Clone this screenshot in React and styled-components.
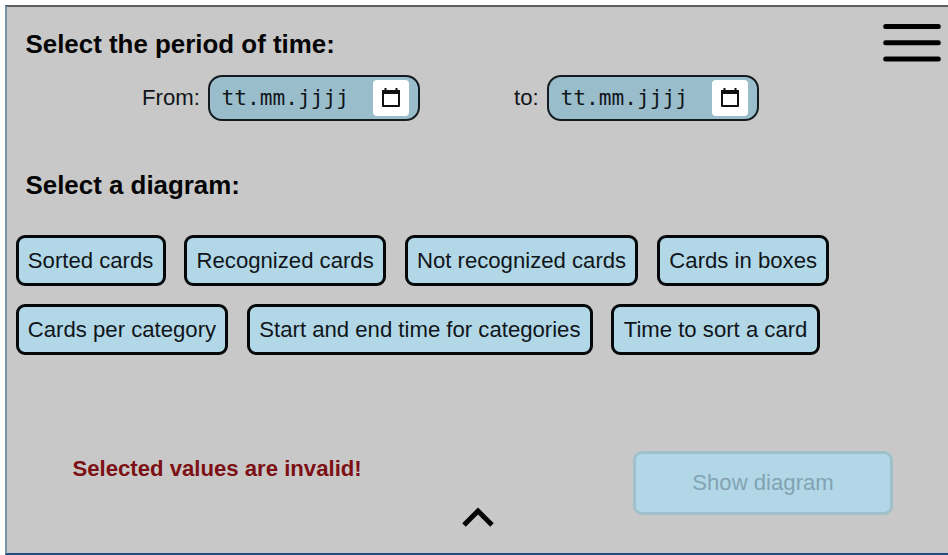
import React from "react";
import styled, { createGlobalStyle } from "styled-components";

const GlobalStyle = createGlobalStyle`
  * { box-sizing: border-box; }
  body {
    margin: 0;
    background: #fff;
    font-family: "Liberation Sans", Arial, sans-serif;
    font-size: 22.15px;
    line-height: 26px;
    color: #10151a;
  }
  button { font: inherit; color: inherit; }
`;

const Page = styled.div`
  height: 555px;
  padding: 5px 0 0 5px;
  overflow: hidden;
`;

const Panel = styled.main`
  display: flex;
  flex-direction: column;
  height: 550px;
  background: #c8c8c8;
  border-top: 2px solid #5c5f61;
  border-left: 2px solid #7795a9;
  border-bottom: 2px solid #1c4c80;
`;

const Header = styled.header`
  display: flex;
  justify-content: space-between;
  height: 67px;
  padding: 16px 7px 0 18.5px;
`;

const Heading = styled.h2`
  margin: 0;
  font-size: 25.9px;
  line-height: 42px;
  font-weight: 700;
  color: #050505;
`;

const MenuButton = styled.button`
  display: flex;
  height: 40px;
  padding: 0;
  border: 0;
  background: none;
`;

const Period = styled.div`
  display: flex;
  align-items: center;
  height: 47px;
  padding-left: 135px;
`;

const Field = styled.div`
  display: flex;
  align-items: center;
  width: ${(p) => p.$width}px;
`;

const FieldLabel = styled.span`
  flex: 1;
`;

const DateBox = styled.span`
  display: flex;
  align-items: center;
  justify-content: space-between;
  width: 212px;
  height: 46px;
  padding: 0 9px 0 11.5px;
  border: 2px solid #131b20;
  border-radius: 14px;
  background: #9abdcb;
  font-family: "DejaVu Sans Mono", monospace;
  font-size: 21.2px;
`;

const PickerButton = styled.button`
  display: flex;
  align-items: center;
  justify-content: center;
  width: 36px;
  height: 36px;
  padding: 0 1px 0 0;
  border: 0;
  border-radius: 4px;
  background: #fff;
`;

const DiagramSection = styled.section`
  height: 114px;
  padding: 43px 0 0 18.5px;
`;

const Choices = styled.div`
  display: flex;
  flex-direction: column;
  gap: 18px;
  padding-left: 8.5px;
`;

const ChoiceRow = styled.div`
  display: flex;
  gap: 18.6px;
`;

const Choice = styled.button`
  height: 51px;
  padding: 0 9.3px;
  border: 3px solid #05080a;
  border-radius: 9px;
  background: #b2d8e8;
  white-space: nowrap;
`;

const Footer = styled.footer`
  display: flex;
  justify-content: space-between;
  height: 64px;
  margin-top: 96px;
  padding: 0 55px 0 65.5px;
`;

const ErrorText = styled.strong`
  padding-top: 5px;
  color: #7d1014;
`;

const ShowButton = styled.button`
  width: 260px;
  height: 64px;
  border: 3px solid #a0c0cb;
  border-radius: 9px;
  background: #b2d8e8;
  && { color: #83a3b2; }
`;

const CollapseBar = styled.div`
  display: flex;
  justify-content: center;
`;

const CollapseIcon = styled.svg`
  display: block;
  margin-top: -10px;
`;

const CalendarIcon = () => (
  <svg width="20" height="22" viewBox="0 0 20 22">
    <path d="M2 4h16v15H2z" fill="none" stroke="#101010" strokeWidth="2" strokeLinejoin="round" />
    <path d="M1 3h18v4H1zM3.5 1h2v3h-2zM14.5 1h2v3h-2z" fill="#101010" />
  </svg>
);

const DateInput = ({ label, width }) => (
  <Field $width={width}>
    <FieldLabel>{label}</FieldLabel>
    <DateBox>
      <span>tt.mm.jjjj</span>
      <PickerButton aria-label="Open calendar"><CalendarIcon /></PickerButton>
    </DateBox>
  </Field>
);

const Gap = styled.div`
  width: 94px;
`;

const rows = [
  ["Sorted cards", "Recognized cards", "Not recognized cards", "Cards in boxes"],
  ["Cards per category", "Start and end time for categories", "Time to sort a card"],
];

export default function App() {
  return (
    <Page>
      <GlobalStyle />
      <Panel>
        <Header>
          <Heading>Select the period of time:</Heading>
          <MenuButton aria-label="Menu">
            <svg width="58" height="40" viewBox="0 0 58 40" stroke="#000" strokeWidth="5" strokeLinecap="round">
              <path d="M2.7 3.5h52.6M2.7 19.7h52.6M2.7 36h52.6" />
            </svg>
          </MenuButton>
        </Header>
        <Period>
          <DateInput label="From:" width={278} />
          <Gap />
          <DateInput label="to:" width={245} />
        </Period>
        <DiagramSection>
          <Heading>Select a diagram:</Heading>
        </DiagramSection>
        <Choices>
          {rows.map((row) => (
            <ChoiceRow key={row[0]}>
              {row.map((name) => <Choice key={name}>{name}</Choice>)}
            </ChoiceRow>
          ))}
        </Choices>
        <Footer>
          <ErrorText>Selected values are invalid!</ErrorText>
          <ShowButton disabled>Show diagram</ShowButton>
        </Footer>
        <CollapseBar>
          <CollapseIcon width="36" height="24" viewBox="0 0 36 24">
            <path d="M4 20L18 6l14 14" fill="none" stroke="#050505" strokeWidth="5" />
          </CollapseIcon>
        </CollapseBar>
      </Panel>
    </Page>
  );
}
